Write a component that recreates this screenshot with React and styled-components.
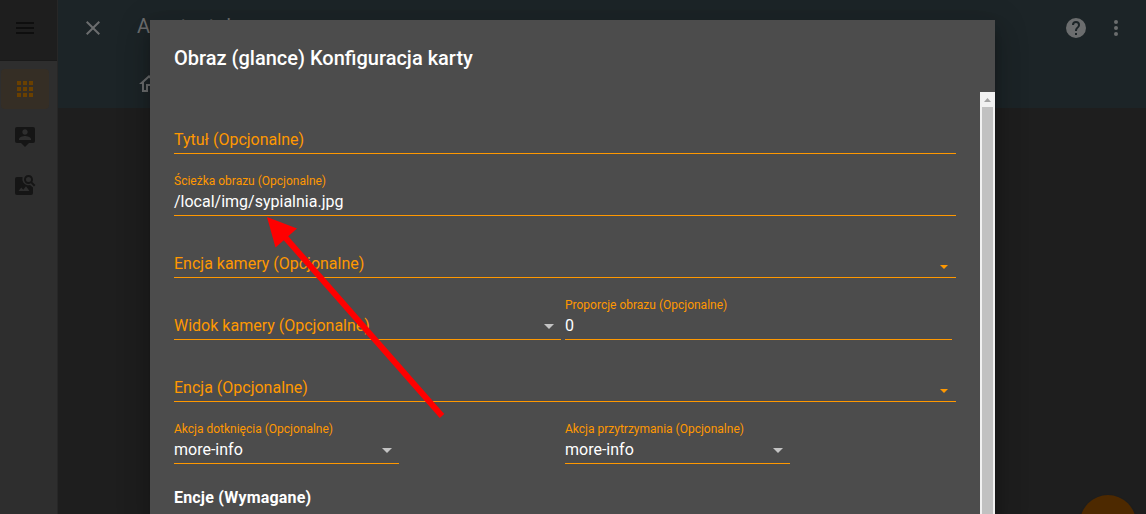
import React from "react";
import styled, { createGlobalStyle } from "styled-components";

const Global = createGlobalStyle`
  * { box-sizing: border-box; }
  body { margin: 0; background: #1e1e1e; font-family: Roboto, "Liberation Sans", sans-serif; overflow: hidden; }
`;

const Page = styled.div`
  position: relative;
  display: flex;
  width: 1146px;
  height: 514px;
  overflow: hidden;
  background: #1e1e1e;
`;

const Sidebar = styled.nav`
  width: 58px;
  flex: none;
  background: #2e2e2e;
  border-right: 1px solid #272727;
`;

const SidebarHeader = styled.div`
  height: 61px;
  padding: 16px 13px;
  background: #1e1e1e;
  border-bottom: 1px solid #1a1a1a;
  color: #0e0e0e;
`;

const SidebarList = styled.div`
  display: flex;
  flex-direction: column;
  gap: 8px;
  padding: 8px 1px;
`;

const SidebarItem = styled.div`
  width: 48px;
  height: 40px;
  padding: 8px 12px;
  border-radius: 4px;
  background: ${(p) => (p.$active ? "#352e25" : "transparent")};
  color: ${(p) => (p.$active ? "#6a4000" : "#151515")};
`;

const Main = styled.main`
  flex: 1;
  min-width: 0;
`;

const AppHeader = styled.header`
  height: 108px;
  background: #1c2427;
  color: #6b6d6e;
`;

const Toolbar = styled.div`
  display: flex;
  align-items: center;
  height: 56px;
  padding: 0 18px 0 23px;
`;

const AppTitle = styled.div`
  flex: 1;
  margin: -4px 0 0 32px;
  font-size: 20px;
  line-height: 24px;
`;

const HeaderActions = styled.div`
  display: flex;
  gap: 16px;
`;

const ViewTabs = styled.div`
  padding: 16px 0 0 79px;
`;

const Icon = styled.svg`
  display: block;
  width: 24px;
  height: 24px;
  fill: currentColor;
`;

const Fab = styled.div`
  position: absolute;
  left: 1080px;
  top: 495px;
  width: 56px;
  height: 56px;
  border-radius: 50%;
  background: #4d2900;
  box-shadow: 0 2px 3px rgba(0, 0, 0, 0.2);
`;

const Dialog = styled.section`
  position: absolute;
  left: 150px;
  top: 20px;
  display: flex;
  flex-direction: column;
  width: 845px;
  height: 500px;
  background: #4c4c4c;
  color: #fff;
  box-shadow: 0 16px 24px 2px rgba(0, 0, 0, 0.14), 0 6px 30px 5px rgba(0, 0, 0, 0.12),
    0 8px 10px -5px rgba(0, 0, 0, 0.4);
`;

const DialogTitle = styled.h2`
  height: 72px;
  margin: 0;
  padding: 24px 24px 0;
  font-size: 20px;
  line-height: 28px;
  font-weight: 500;
`;

const DialogBody = styled.div`
  display: flex;
  flex: 1;
  min-height: 0;
`;

const Form = styled.div`
  flex: 1;
  padding: 8px 24px 0;
`;

const Row = styled.div`
  display: flex;
  gap: 4px;
`;

const Cell = styled.div`
  width: 387px;
`;

const Field = styled.div`
  width: ${(p) => p.$width || "100%"};
  height: 62px;
  padding: 8px 0;
`;

const FieldLabel = styled.div`
  height: 20px;
  font-size: 12px;
  line-height: 22px;
  color: #ff9800;
  white-space: nowrap;
`;

const FieldControl = styled.div`
  display: flex;
  align-items: center;
  justify-content: space-between;
  height: 26px;
  padding-bottom: 1px;
  border-bottom: 1px solid #ff9800;
  font-size: 16px;
  line-height: 24px;
  color: ${(p) => (p.$empty ? "#ff9800" : "#fff")};
`;

const Caret = styled.svg`
  display: block;
  width: ${(p) => (p.$small ? 8 : 10)}px;
  height: ${(p) => (p.$small ? 4 : 5)}px;
  margin: ${(p) => (p.$small ? "6px 8px 0 0" : "1px 7px 0 0")};
  fill: ${(p) => (p.$small ? "#ff9800" : "#c3c3c3")};
`;

const SectionTitle = styled.h3`
  margin: 14px 0 0;
  font-size: 16px;
  line-height: 24px;
  font-weight: 700;
  letter-spacing: 0.19px;
`;

const Scrollbar = styled.div`
  width: 15px;
  background: #f1f1f1;
`;

const ScrollButton = styled.div`
  display: flex;
  justify-content: center;
  height: 15px;
  padding-top: 6px;
`;

const ScrollThumb = styled.div`
  height: 420px;
  margin: 0 2px;
  background: #c1c1c1;
`;

const Pointer = styled.svg`
  position: absolute;
  left: 0;
  top: 0;
  pointer-events: none;
`;

const icons = {
  menu: "M3 6h18v2H3V6m0 5h18v2H3v-2m0 5h18v2H3v-2Z",
  apps: "M4 4h4v4H4V4m6 0h4v4h-4V4m6 0h4v4h-4V4M4 10h4v4H4v-4m6 0h4v4h-4v-4m6 0h4v4h-4v-4M4 16h4v4H4v-4m6 0h4v4h-4v-4m6 0h4v4h-4v-4Z",
  account:
    "M20 2a2 2 0 0 1 2 2v12a2 2 0 0 1-2 2h-4l-4 4-4-4H4a2 2 0 0 1-2-2V4a2 2 0 0 1 2-2h16M12 4.3C10.5 4.3 9.3 5.5 9.3 7S10.5 9.7 12 9.7 14.7 8.5 14.7 7 13.5 4.3 12 4.3M18 15v-.9C18 12.1 14 11 12 11s-6 1.100-6 3.100V15h12Z",
  imageSearch:
    "M15.5 2C13 2 11 4 11 6.500S13 11 15.500 11c.88 0 1.710-.25 2.400-.69L21 13.390 22.390 12l-3.070-3.110c.43-.69.68-1.510.68-2.390C20 4 18 2 15.500 2m0 2a2.500 2.500 0 1 1 0 5 2.500 2.500 0 0 1 0-5M4 4a2 2 0 0 0-2 2v14a2 2 0 0 0 2 2h14a2 2 0 0 0 2-2v-5.500l-3-2.500a6 6 0 0 1-7.500-7V4H4m9 9.300L16.500 18h-11l2.750-3.530 1.960 2.360L13 13.300Z",
  close:
    "M19 6.410 17.590 5 12 10.590 6.410 5 5 6.410 10.590 12 5 17.590 6.410 19 12 13.410 17.590 19 19 17.590 13.410 12 19 6.410Z",
  help: "M12 2a10 10 0 1 0 0 20 10 10 0 0 0 0-20m1 17h-2v-2h2v2m2.070-7.750-.9.920C13.450 12.900 13 13.500 13 15h-2v-.5c0-1.110.45-2.110 1.170-2.830l1.240-1.260c.37-.36.59-.86.59-1.410a2 2 0 0 0-4 0H8a4 4 0 1 1 8 0c0 .88-.36 1.670-.93 2.250Z",
  dots: "M12 8a2 2 0 1 0 0-4 2 2 0 0 0 0 4m0 2a2 2 0 1 0 0 4 2 2 0 0 0 0-4m0 6a2 2 0 1 0 0 4 2 2 0 0 0 0-4Z",
  home: "M12 5.690 17 10.190V18h-2v-6H9v6H7v-7.810l5-4.500M12 3 2 12h3v8h6v-6h2v6h6v-8h3L12 3Z",
};

const Glyph = ({ name }) => (
  <Icon viewBox="0 0 24 24">
    <path fillRule="evenodd" d={icons[name]} />
  </Icon>
);

const TextField = ({ label, value, caret, width }) => (
  <Field $width={width}>
    <FieldLabel>{value ? label : ""}</FieldLabel>
    <FieldControl $empty={!value}>
      <span>{value || label}</span>
      {caret && (
        <Caret viewBox="0 0 10 5" preserveAspectRatio="none" $small={caret === "small"}>
          <path d="M0 0h10L5 5Z" />
        </Caret>
      )}
    </FieldControl>
  </Field>
);

export default function App() {
  return (
    <Page>
      <Global />
      <Sidebar>
        <SidebarHeader>
          <Glyph name="menu" />
        </SidebarHeader>
        <SidebarList>
          <SidebarItem $active>
            <Glyph name="apps" />
          </SidebarItem>
          <SidebarItem>
            <Glyph name="account" />
          </SidebarItem>
          <SidebarItem>
            <Glyph name="imageSearch" />
          </SidebarItem>
        </SidebarList>
      </Sidebar>
      <Main>
        <AppHeader>
          <Toolbar>
            <Glyph name="close" />
            <AppTitle>Asystent domowy</AppTitle>
            <HeaderActions>
              <Glyph name="help" />
              <Glyph name="dots" />
            </HeaderActions>
          </Toolbar>
          <ViewTabs>
            <Glyph name="home" />
          </ViewTabs>
        </AppHeader>
      </Main>
      <Fab />
      <Dialog>
        <DialogTitle>Obraz (glance) Konfiguracja karty</DialogTitle>
        <DialogBody>
          <Form>
            <TextField label="Tytuł (Opcjonalne)" />
            <TextField label="Ścieżka obrazu (Opcjonalne)" value="/local/img/sypialnia.jpg" />
            <TextField label="Encja kamery (Opcjonalne)" caret="small" />
            <Row>
              <Cell>
                <TextField label="Widok kamery (Opcjonalne)" caret="large" />
              </Cell>
              <Cell>
                <TextField label="Proporcje obrazu (Opcjonalne)" value="0" />
              </Cell>
            </Row>
            <TextField label="Encja (Opcjonalne)" caret="small" />
            <Row>
              <Cell>
                <TextField label="Akcja dotknięcia (Opcjonalne)" value="more-info" caret="large" width="225px" />
              </Cell>
              <Cell>
                <TextField label="Akcja przytrzymania (Opcjonalne)" value="more-info" caret="large" width="225px" />
              </Cell>
            </Row>
            <SectionTitle>Encje (Wymagane)</SectionTitle>
          </Form>
          <Scrollbar>
            <ScrollButton>
              <svg width="7" height="4" viewBox="0 0 7 4">
                <path d="M3.500 0 7 4H0Z" fill="#a3a3a3" />
              </svg>
            </ScrollButton>
            <ScrollThumb />
          </Scrollbar>
        </DialogBody>
      </Dialog>
      <Pointer width="1146" height="514" viewBox="0 0 1146 514">
        <path d="M284 236 442 416" stroke="#f00" strokeWidth="6" fill="none" />
        <path d="M267 217 297 228.500 275.500 247.500Z" fill="#f00" />
      </Pointer>
    </Page>
  );
}
